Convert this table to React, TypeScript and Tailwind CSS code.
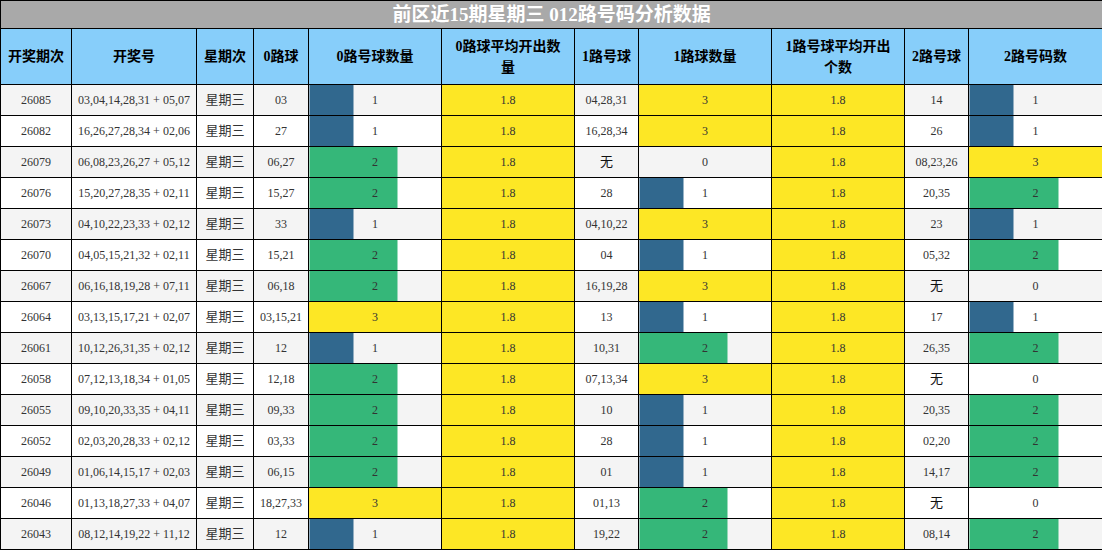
import React from "react";

type Row = [number, string, string, number, string, number, string, number];

const rows: Row[] = [
  [26085, "03,04,14,28,31 + 05,07", "03", 1, "04,28,31", 3, "14", 1],
  [26082, "16,26,27,28,34 + 02,06", "27", 1, "16,28,34", 3, "26", 1],
  [26079, "06,08,23,26,27 + 05,12", "06,27", 2, "无", 0, "08,23,26", 3],
  [26076, "15,20,27,28,35 + 02,11", "15,27", 2, "28", 1, "20,35", 2],
  [26073, "04,10,22,23,33 + 02,12", "33", 1, "04,10,22", 3, "23", 1],
  [26070, "04,05,15,21,32 + 02,11", "15,21", 2, "04", 1, "05,32", 2],
  [26067, "06,16,18,19,28 + 07,11", "06,18", 2, "16,19,28", 3, "无", 0],
  [26064, "03,13,15,17,21 + 02,07", "03,15,21", 3, "13", 1, "17", 1],
  [26061, "10,12,26,31,35 + 02,12", "12", 1, "10,31", 2, "26,35", 2],
  [26058, "07,12,13,18,34 + 01,05", "12,18", 2, "07,13,34", 3, "无", 0],
  [26055, "09,10,20,33,35 + 04,11", "09,33", 2, "10", 1, "20,35", 2],
  [26052, "02,03,20,28,33 + 02,12", "03,33", 2, "28", 1, "02,20", 2],
  [26049, "01,06,14,15,17 + 02,03", "06,15", 2, "01", 1, "14,17", 2],
  [26046, "01,13,18,27,33 + 04,07", "18,27,33", 3, "01,13", 2, "无", 0],
  [26043, "08,12,14,19,22 + 11,12", "12", 1, "19,22", 2, "08,14", 2],
];

const colors: Record<number, string> = { 1: "#31688e", 2: "#35b779", 3: "#fde725" };

const widths = [71, 125, 57, 55, 133, 133, 64, 133, 133, 64, 134];

const headers = [
  "开奖期次",
  "开奖号",
  "星期次",
  "0路球",
  "0路号球数量",
  "0路球平均开出数量",
  "1路号球",
  "1路球数量",
  "1路号球平均开出个数",
  "2路号球",
  "2路号码数",
];

const font = { fontFamily: '"Liberation Serif", "Noto Sans CJK SC", serif' };

function barStyle(n: number): React.CSSProperties {
  if (!n) return {};
  const c = colors[n];
  const p = (n / 3) * 100;
  return { background: `linear-gradient(to right, ${c} 0, ${c} ${p}%, transparent ${p}%)` };
}

function Val({ v }: { v: string }) {
  return v === "无" ? <span className="text-[13px] text-[#111]">{v}</span> : <>{v}</>;
}

export default function App() {
  return (
    <div className="w-[1102px] h-[550px] overflow-hidden bg-white" style={font}>
      <table className="table-fixed border-collapse w-[1102px]">
        <colgroup>
          {widths.map((w, i) => (
            <col key={i} style={{ width: w }} />
          ))}
        </colgroup>
        <thead>
          <tr>
            <th
              colSpan={11}
              className="h-[28px] p-0 border border-black bg-[#a9a9a9] text-white text-[19px] font-bold leading-[26px] text-center"
            >
              前区近15期星期三 012路号码分析数据
            </th>
          </tr>
          <tr>
            {headers.map((h, i) => (
              <th
                key={i}
                className={`h-[56px] py-0 border border-black bg-[#87cefa] text-black text-[14px] font-bold leading-[21px] text-center ${
                  widths[i] >= 130 ? "px-2" : "px-0 whitespace-nowrap"
                }`}
              >
                {h}
              </th>
            ))}
          </tr>
        </thead>
        <tbody>
          {rows.map((r, idx) => {
            const bg = idx % 2 === 0 ? "bg-[#f4f4f4]" : "bg-white";
            const td = "h-[31px] p-0 border border-black text-center text-[12px] text-[#333] leading-[30px] whitespace-nowrap";
            return (
              <tr key={r[0]} className={bg}>
                <td className={td}>{r[0]}</td>
                <td className={td}>{r[1]}</td>
                <td className={`${td} text-[13px] text-[#111]`}>星期三</td>
                <td className={td}>
                  <Val v={r[2]} />
                </td>
                <td className={td} style={barStyle(r[3])}>
                  {r[3]}
                </td>
                <td className={`${td} bg-[#fde725]`}>1.8</td>
                <td className={td}>
                  <Val v={r[4]} />
                </td>
                <td className={td} style={barStyle(r[5])}>
                  {r[5]}
                </td>
                <td className={`${td} bg-[#fde725]`}>1.8</td>
                <td className={td}>
                  <Val v={r[6]} />
                </td>
                <td className={td} style={barStyle(r[7])}>
                  {r[7]}
                </td>
              </tr>
            );
          })}
        </tbody>
      </table>
    </div>
  );
}
